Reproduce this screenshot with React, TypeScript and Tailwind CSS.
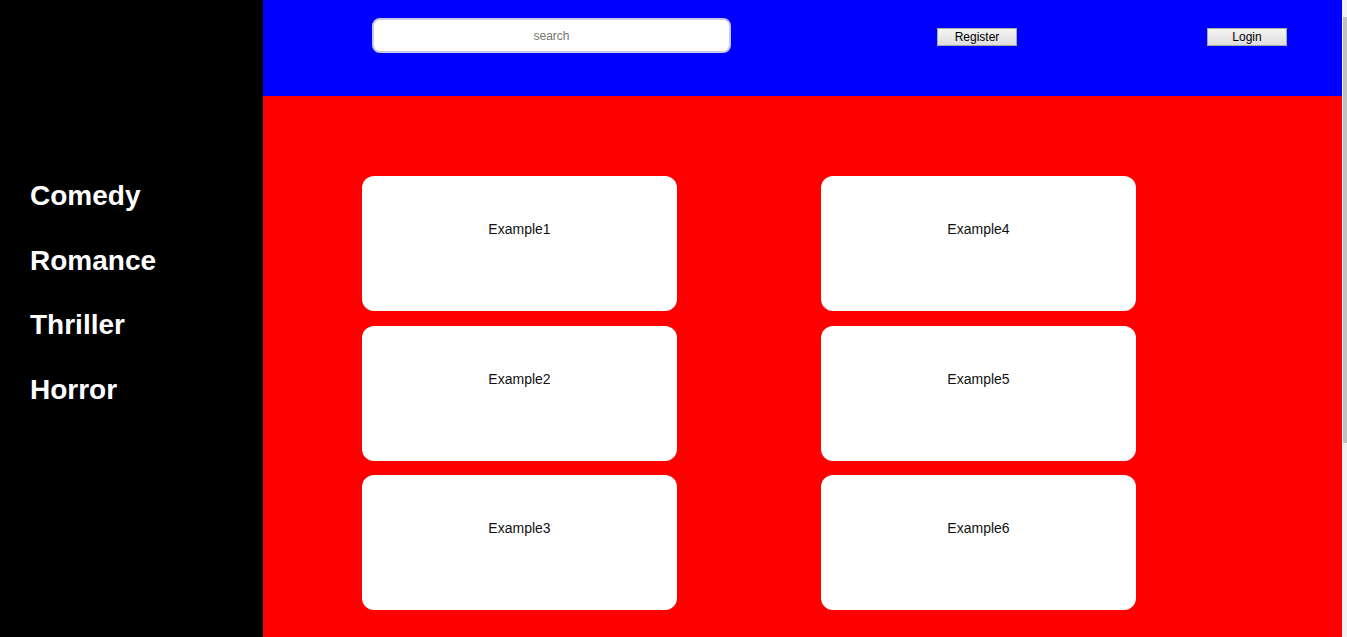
import React from 'react'

const genres = ['Comedy', 'Romance', 'Thriller', 'Horror']
const columns = [
  ['Example1', 'Example2', 'Example3'],
  ['Example4', 'Example5', 'Example6'],
]

const font = { fontFamily: '"Liberation Sans", Arial, sans-serif' }

export default function App() {
  return (
    <div className="flex h-screen overflow-hidden" style={font}>
      <div className="flex min-h-[950px] flex-1">
        <aside className="w-[263px] shrink-0 bg-black pt-[164px] pl-[30px]">
          {genres.map((g) => (
            <div key={g} className="text-[28px] font-bold leading-[64.5px] text-white">
              {g}
            </div>
          ))}
        </aside>
        <div className="flex flex-1 flex-col">
          <header className="flex h-[96px] items-start bg-[#0000ff] pl-[109px]">
            <input
              placeholder="search"
              className="mt-[18px] h-[35px] w-[359px] rounded-[8px] border-2 border-[#c8c8e8] bg-white text-center text-[12px] text-black outline-none placeholder:text-[#757575]"
            />
            <button className="mt-[28px] ml-[206px] h-[18px] w-[80px] border border-[#a8a8a8] bg-gradient-to-b from-[#f4f4f4] to-[#dedede] text-[12px] leading-[16px] text-black">
              Register
            </button>
            <button className="mt-[28px] ml-[190px] h-[18px] w-[80px] border border-[#a8a8a8] bg-gradient-to-b from-[#f4f4f4] to-[#dedede] text-[12px] leading-[16px] text-black">
              Login
            </button>
          </header>
          <main className="flex flex-1 gap-x-[144px] bg-[#ff0000] pt-[80px] pl-[99px]">
            {columns.map((col, i) => (
              <div key={i} className="flex flex-col gap-[14.5px]">
                {col.map((name) => (
                  <div
                    key={name}
                    className="h-[135px] w-[315px] rounded-[12px] bg-white pt-[44px] text-center text-[14px] leading-[18px] text-[#111]"
                  >
                    {name}
                  </div>
                ))}
              </div>
            ))}
          </main>
        </div>
      </div>
      {/* scrollbar */}
      <div className="flex w-[5px] shrink-0 flex-col border-l border-[#f4f4f4] bg-[#f1f1f1] pt-[17px]">
        <div className="h-[426px] bg-[#c1c1c1]" />
      </div>
    </div>
  )
}
